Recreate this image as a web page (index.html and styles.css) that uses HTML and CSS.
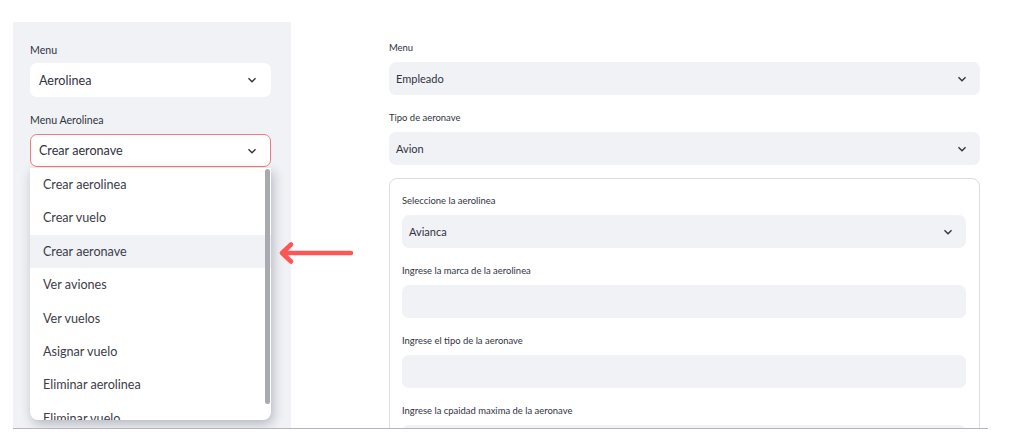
FILE: index.html
```html
<!DOCTYPE html>
<html lang="es">
<head>
<meta charset="utf-8">
<title>Aerolinea</title>
<link rel="stylesheet" href="styles.css">
</head>
<body>
<div class="screen">
  <aside class="sidebar">
    <div class="field">
      <div class="label">Menu</div>
      <div class="select white">
        <span>Aerolinea</span>
        <svg class="chev" viewBox="0 0 24 24"><path d="M7.41 8.59L12 13.17l4.59-4.58L18 10l-6 6-6-6 1.41-1.41z"/></svg>
      </div>
    </div>
    <div class="field second">
      <div class="label">Menu Aerolinea</div>
      <div class="select white focused">
        <span>Crear aeronave</span>
        <svg class="chev" viewBox="0 0 24 24"><path d="M7.41 8.59L12 13.17l4.59-4.58L18 10l-6 6-6-6 1.41-1.41z"/></svg>
      </div>
      <ul class="dropdown">
        <li>Crear aerolinea</li>
        <li>Crear vuelo</li>
        <li class="active">Crear aeronave</li>
        <li>Ver aviones</li>
        <li>Ver vuelos</li>
        <li>Asignar vuelo</li>
        <li>Eliminar aerolinea</li>
        <li>Eliminar vuelo</li>
        <div class="scrollbar"></div>
      </ul>
    </div>
  </aside>
  <main class="main">
    <div class="mfield">
      <div class="mlabel">Menu</div>
      <div class="mselect">
        <span>Empleado</span>
        <svg class="chev" viewBox="0 0 24 24"><path d="M7.41 8.59L12 13.17l4.59-4.58L18 10l-6 6-6-6 1.41-1.41z"/></svg>
      </div>
    </div>
    <div class="mfield">
      <div class="mlabel">Tipo de aeronave</div>
      <div class="mselect">
        <span>Avion</span>
        <svg class="chev" viewBox="0 0 24 24"><path d="M7.41 8.59L12 13.17l4.59-4.58L18 10l-6 6-6-6 1.41-1.41z"/></svg>
      </div>
    </div>
    <div class="card">
      <div class="mfield">
        <div class="mlabel">Seleccione la aerolinea</div>
        <div class="mselect">
          <span>Avianca</span>
          <svg class="chev" viewBox="0 0 24 24"><path d="M7.41 8.59L12 13.17l4.59-4.58L18 10l-6 6-6-6 1.41-1.41z"/></svg>
        </div>
      </div>
      <div class="mfield">
        <div class="mlabel">Ingrese la marca de la aerolinea</div>
        <div class="minput"></div>
      </div>
      <div class="mfield">
        <div class="mlabel">Ingrese el tipo de la aeronave</div>
        <div class="minput"></div>
      </div>
      <div class="mfield">
        <div class="mlabel">Ingrese la cpaidad maxima de la aeronave</div>
        <div class="minput"></div>
      </div>
    </div>
  </main>
</div>
<svg class="arrow" viewBox="0 0 78 26" width="78" height="26">
  <path d="M75 13 H6 M15 4.5 L6 13 L15 21.5" fill="none" stroke="#fd5656" stroke-width="4.5" stroke-linecap="round" stroke-linejoin="round"/>
</svg>
</body>
</html>
```
FILE: styles.css
```css
* { box-sizing: border-box; }
html, body { margin: 0; padding: 0; background: #ffffff; }
body {
  font-family: Lato, "Noto Sans", sans-serif;
  color: #31333f;
  width: 1011px;
  height: 448px;
  overflow: hidden;
  position: relative;
}
.screen {
  display: flex;
  margin: 22px 0 0 13px;
  width: 975px;
  height: 407px;
  border-bottom: 1px solid #b7b2bf;
  overflow: hidden;
}
.sidebar {
  width: 278px;
  flex: none;
  background: #f0f2f6;
  padding: 20px 20px 0 17px;
  position: relative;
}
.field { display: flex; flex-direction: column; }
.field.second { margin-top: 15px; position: relative; }
.label {
  font-size: 10.6px;
  line-height: 16px;
  height: 16px;
  margin-bottom: 5px;
}
.field.second .label { margin-bottom: 6px; }
.select {
  height: 34px;
  border-radius: 7px;
  border: 1px solid transparent;
  display: flex;
  align-items: center;
  justify-content: space-between;
  padding: 0 10px 0 8px;
  font-size: 12.6px;
}
.select.white { background: #ffffff; }
.select.focused { border-color: #f47a7a; height: 33px; }
.chev { width: 16px; height: 16px; fill: #31333f; flex: none; }
.dropdown {
  position: absolute;
  left: 0;
  right: 0;
  top: 56px;
  height: 252px;
  margin: 0;
  padding: 0;
  list-style: none;
  background: #ffffff;
  border-radius: 0 0 8px 8px;
  box-shadow: 2px 4px 12px rgba(30, 30, 50, 0.28);
  overflow: hidden;
}
.dropdown li {
  height: 33.4px;
  line-height: 33.4px;
  padding-left: 13px;
  font-size: 12.6px;
  color: #3c3d48;
}
.dropdown li.active { background: #f0f2f6; }
.scrollbar {
  position: absolute;
  right: 1px;
  top: 1px;
  width: 5px;
  height: 235px;
  border-radius: 3px;
  background: #a9a9b1;
}
.main {
  flex: none;
  width: 591px;
  margin-left: 98px;
  padding-top: 19px;
  display: flex;
  flex-direction: column;
}
.mfield { display: flex; flex-direction: column; margin-bottom: 16px; }
.mlabel {
  font-size: 9.45px;
  line-height: 14px;
  height: 14px;
  margin-bottom: 7px;
}
.mselect {
  height: 33px;
  border-radius: 7px;
  background: #f0f2f6;
  display: flex;
  align-items: center;
  justify-content: space-between;
  padding: 0 10px 0 7px;
  font-size: 11px;
}
.minput {
  height: 33px;
  border-radius: 7px;
  background: #f0f2f6;
}
.card {
  margin-top: -3px;
  border: 1px solid #dcdde2;
  border-radius: 8px;
  padding: 15px 13px 0 12px;
}
.arrow {
  position: absolute;
  left: 276px;
  top: 240px;
}
```
